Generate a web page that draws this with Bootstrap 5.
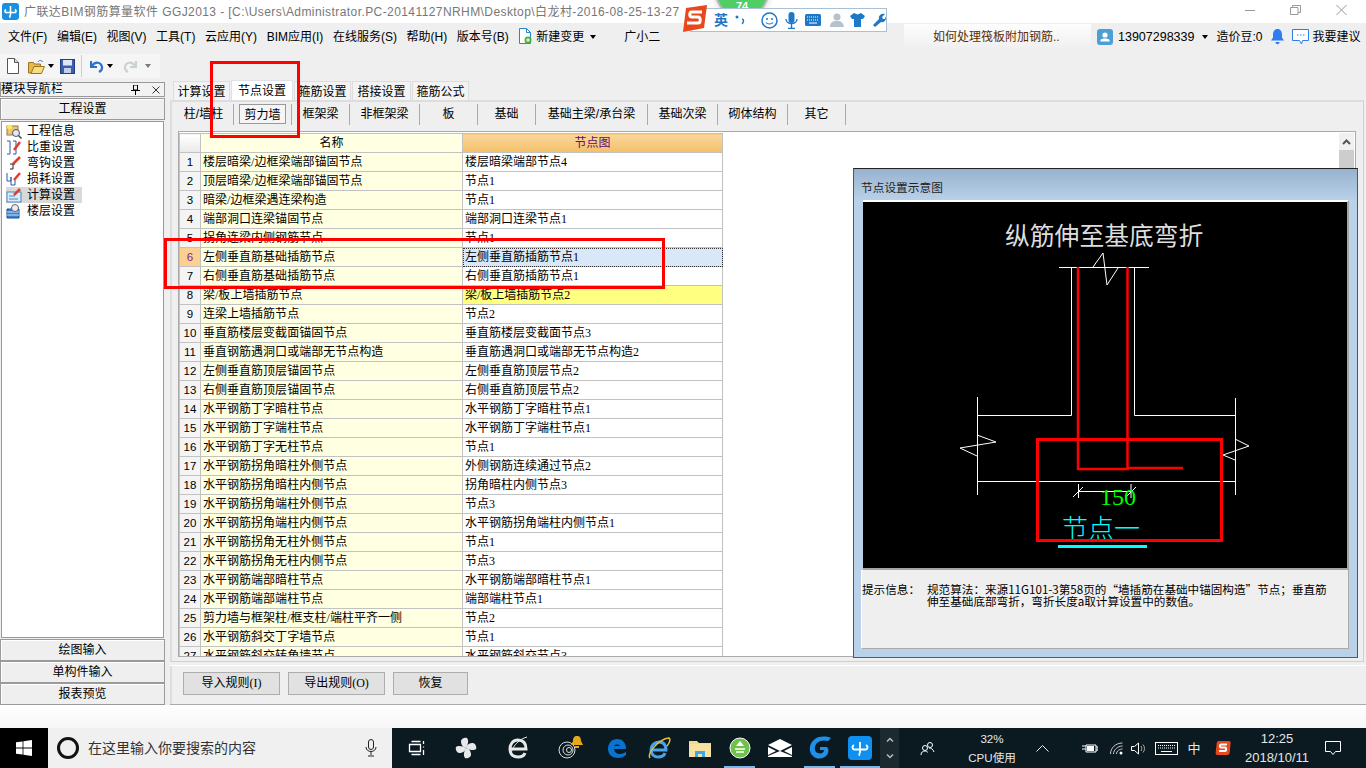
<!DOCTYPE html>
<html lang="zh">
<head>
<meta charset="utf-8">
<title>GGJ2013</title>
<link href="https://cdn.jsdelivr.net/npm/bootstrap@5.3.0/dist/css/bootstrap.min.css" rel="stylesheet">
<style>
html,body{height:768px;overflow:hidden}
body{width:1366px;position:relative;background:#efefef;color:#000;font:12px/16px "Liberation Sans","Noto Sans CJK SC",sans-serif}
svg{display:block;flex:none}
.simsun{font-family:"Liberation Serif","Noto Sans CJK SC",serif}
.title-row{height:23px;background:#fff;color:#777}
.app-logo{margin:3px 5px 0 2px}
.title-text{letter-spacing:.42px;white-space:nowrap;line-height:24px}
.win-ctl{position:absolute;top:5px}
.c1{left:1245px}.c2{left:1290px}.c3{left:1336px}
.menu-row{height:27px;padding-left:8px}
.menu-row .mi{margin-right:9.6px;white-space:nowrap}
.menu-row .mi.nogap{margin-right:6px}
.menu-row .mi.gxe{margin-left:28px}
.caret-s{width:0;height:0;border:3.5px solid transparent;border-top:4px solid #000;border-bottom:0;display:inline-block}
.q-tab{position:absolute;left:904px;top:24px;width:187px;height:26px;background:linear-gradient(#fdfdfd,#efefef);color:#5c2c00;line-height:26px;padding-left:29px;font-size:12px}
.acct{position:absolute;left:1097px;top:24px;height:26px}
.phone{font-size:12.5px;margin-left:1px}
.tool-row{height:30px;padding:4px 0 0 0}
.tool-box{height:24px;width:160px;background:#f5f5f5;padding-left:6px}
.tb-open{margin-left:9px}
.tb-save{margin-left:6px}
.tool-sep{width:1px;height:22px;background:#ccc;margin:0 8px 0 6px}
.tb-arrow{margin-left:3px}
.tb-redo{margin-left:10px}
.work{height:625px}
.left-pane{width:165px;margin-right:5px}
.nav-head{height:15px;margin-top:2px;border:1px solid #999;background:#f2f2f2;line-height:13px;letter-spacing:.5px}
.pane-btn{display:block;width:100%;height:22px;padding:0;border:1px solid #9a9a9a;border-radius:0;background:#efefef;color:#000;font-size:12px;line-height:20px;box-shadow:inset 1px 1px 0 #fff}
.pane-btn:hover{background:#efefef;color:#000;border-color:#9a9a9a}
.pane-btn.first{margin-top:1px}
.nav-tree{height:517px;margin:1px 0 1px 1px;width:163px;border:1px solid #999;border-radius:0;background:#fff;padding:1px 0 0 4px}
.tree-row{height:16px;padding:0;border:0;background:transparent;color:#000;display:flex;align-items:center;width:76px;gap:5px;font-size:12px;border-radius:0}
.tree-row.on{background:#d9d9d9}
.right-pane{width:1196px}
.tabs-row{height:20px;border:0;padding:1px 0 0 3px;gap:1px;margin:0}
.tabs-row .nav-link{border:1px solid #ddd;border-bottom:0;border-radius:0;background:#f3f3f3;color:#000;height:19px;padding:0;line-height:20px;text-align:center;font-size:12px;margin:0}
.tabs-row .tw1{width:57px}.tabs-row .tw2{width:62px;background:#fff;height:20px;margin-top:-1px}.tabs-row .tw3{width:57px}.tabs-row .tw4{width:59px}
.page-box{height:562px;border:1px solid #d0d0d0;border-left:2px solid #ddd;border-top:2px solid #ddd;margin-right:2px;padding:2px;display:flex;flex-direction:column}
.sub-row{height:25px;padding-left:0;border-bottom:0;flex:none}
.sub-tab{height:21px;line-height:21px;text-align:center;border-right:1px solid #aaa;width:58px;font-size:12px;flex:none}
.sub-tab.st0{width:60px}.sub-tab.st1{width:70px}.sub-tab.st2{width:112px}
.sub-box{display:block;margin:0 5px;height:20px;line-height:20px;border:1px solid #999;background:#f5f5f5}
.grid-frame{margin:2px 0 0 4px;height:526px;width:1178px;border:1px solid #aaa;background:#fff;display:flex;overflow:hidden;flex:none}
.grid-wrap{width:1160px;overflow:hidden;padding:1px 0 0 0;height:524px}
.ntable{width:544px;margin:0;table-layout:fixed;border-collapse:collapse;--bs-table-bg:transparent;border-color:#c2c2c2}
.ntable th,.ntable td{height:19px;padding:0 0 0 2px;line-height:18px;font-weight:400;font-size:12px;white-space:nowrap;border:1px solid #c2c2c2;box-sizing:border-box;overflow:hidden;color:#000;background:#fff;vertical-align:middle}
.ntable .ncol{width:21px;padding:0;text-align:center;background:#f4f4f4;font-family:"Liberation Sans",sans-serif;font-size:11.5px}
.ntable .lcol{width:262px;background:#ffffe2;letter-spacing:.02px}
.ntable th{text-align:center;padding:0;background:linear-gradient(#fff,#e9e9e9)}
.ntable th.ncol{background:linear-gradient(#fff,#e9e9e9)}
.ntable th.hot{background:linear-gradient(#fad79e,#f3c066);color:#5f0a78}
.ntable td.sel{background:#d8e8f8;outline:1px dotted #333;outline-offset:-1px}
.ntable td.ncol.sel-n{background:#fcd08f;color:#7a1fa0}
.ntable td.warn{background:#ffff80}
.vbar{width:15px;background:#f0f0f0;flex:none;height:100%;margin-top:1px}
.vbar-top{height:17px;display:flex;align-items:center;justify-content:center}
.vbar-thumb{height:200px;background:#cdcdcd}
.btn-bar{height:40px;margin-top:3px;border-top:1px solid #fff;padding:6px 0 0 13px;gap:8px;border-bottom:1px solid #aaa;box-shadow:inset 2px 0 0 #ddd;margin-right:0}
.act-btn{height:23px;padding:0;border:1px solid #adadad;border-radius:0;background:#e1e1e1;color:#000;font-size:12px;line-height:21px;width:97px}
.act-btn:hover{background:#e1e1e1;color:#000;border-color:#adadad}
.act-btn.short{width:75px}
.strip{height:23px;background:linear-gradient(#fff,#f6f6f6)}
.taskbar{height:40px;background:#0a1a20;color:#fff;position:relative}
.start-slot{width:48px;height:40px;background:#000;display:flex;align-items:center;justify-content:center}
.search-box{width:344px;height:40px;background:#f0f0f0;color:#333;display:flex;align-items:center;padding-left:9px;font-size:14px;position:relative}
.ring{width:22px;height:22px;border:3px solid #111;border-radius:50%;margin:0 9px 0 0;flex:none}
.search-mic{position:absolute;left:317px;top:11px}
.tslot{height:40px;display:flex;align-items:center;justify-content:center;position:relative;flex:none}
.run::after{content:"";position:absolute;left:4px;right:5px;bottom:0;height:2px;background:#76b9ed}
.active-app.run::after{left:0;right:0}
.s40{width:40px}.s42{width:42px}.s48{width:48px}.s52{width:52px}.s54{width:54px}
.s-updown{width:19px;background:#1c2a30;gap:12px}
.s-person{width:56px}.s-cpu{width:74px}.s-caret{width:26px}.s-batt{width:47px;padding-left:23px}.s-wifi{width:28px}.s-vol{width:16px}.s-zh{width:16px;font-size:13px;color:#fff}.s-sogou{width:42px}.s-clock{width:66px;white-space:nowrap;font-size:13px}.s-note{width:46px}
.tray{font-size:11.6px;text-align:center;line-height:19px;color:#e6e6e6}
.s-clock.tray{font-size:13px}
.s-zh.tray{font-size:13px}
.dialog{position:absolute;left:853px;top:168px;width:505px;height:490px;border:1px solid #222;border-color:#222 #555 #2a6b80 #555;background:linear-gradient(#98b2ce,#bad1ea 32px);padding:2px 9px 8px 7px}
.dlg-title{height:29px;line-height:33px;color:#222;font-size:11.7px}
.dlg-img{background:#000;width:486px;height:370px;border-top:2px solid #fff;border-right:2px solid #a4a4a4;border-bottom:2px solid #a4a4a4;margin-left:2px}
.dlg-info{height:79px;background:#efefef;border-right:1px solid #aaa;border-bottom:1px solid #aaa;width:488px;display:flex;padding:13px 0 0 0;font:11.6px/12px "Noto Sans CJK SC",sans-serif;white-space:nowrap;border-left:1px solid #fff}
.dlg-info .lbl{width:65px;flex:none}
.anno{position:absolute;border:3px solid #f00;pointer-events:none}
.a1{left:210px;top:61px;width:90px;height:77px}
.a2{left:164px;top:238px;width:501px;height:51px}
.a3{left:1036px;top:438px;width:187px;height:104px}
.ball{position:absolute;left:717px;top:-33px;width:50px;height:50px;border-radius:50%;background:#4fcf63;box-shadow:0 0 0 2px #bbb,0 0 6px 3px #ddd;color:#fff;font-weight:700;font-size:11px;text-align:center;padding-top:32px;line-height:14px}
.ime{position:absolute;left:690px;top:8px;width:197px;height:24px;background:#fff;border:1px solid #a9c0d6;display:flex;align-items:center;padding-left:23px;color:#1e78c8}
.ime-s{position:absolute;left:682px;top:5px}
.ime-ying{font-weight:700;font-size:14px;width:21px}
.ime-dot{margin-right:12px;margin-left:0}
.ime-gap{margin-left:7px}
</style>
</head>
<body class="d-flex flex-column">

<div class="title-row d-flex flex-none">
  <svg class="app-logo" width="17" height="17" viewBox="0 0 17 17"><rect width="17" height="17" rx="3" fill="#1a8fe0"/><path d="M8.5 3v9M4 6.5c-2 1.500-1 3.500 1 3h7c2 .5 3-1.500 1-3M8.500 12c-1 1-1 2 0 2.500" stroke="#fff" stroke-width="1.600" fill="none"/></svg>
  <span class="title-text">广联达BIM钢筋算量软件 GGJ2013 - [C:\Users\Administrator.PC-20141127NRHM\Desktop\白龙村-2016-08-25-13-27</span>
  <svg class="win-ctl c1" width="10" height="10"><path d="M0 5.500h10" stroke="#999"/></svg>
  <svg class="win-ctl c2" width="11" height="10"><path d="M.5 2.500h7.500v7h-7.500zM2.500 2.500v-2h8v7h-2.500" stroke="#999" fill="none"/></svg>
  <svg class="win-ctl c3" width="11" height="10"><path d="M.5 0l10 10M10.500 0l-10 10" stroke="#999"/></svg>
</div>

<div class="menu-row d-flex align-items-center">
  <span class="mi">文件(F)</span><span class="mi">编辑(E)</span><span class="mi">视图(V)</span><span class="mi">工具(T)</span><span class="mi">云应用(Y)</span><span class="mi">BIM应用(I)</span><span class="mi">在线服务(S)</span><span class="mi">帮助(H)</span><span class="mi">版本号(B)</span>
  <svg width="14" height="17" viewBox="0 0 14 17" class="me-1"><path d="M1.500.5h7l4 4v11h-11z" fill="#fff" stroke="#2a86c8"/><path d="M8.500.5v4h4" fill="none" stroke="#2a86c8"/><circle cx="10" cy="12" r="3.500" fill="#4caf3a"/><path d="M8 12h4M10 10v4" stroke="#fff"/></svg>
  <span class="mi nogap">新建变更</span><span class="caret-s"></span>
  <span class="mi gxe">广小二</span>
</div>
<div class="q-tab">如何处理筏板附加钢筋..</div>
<div class="acct d-flex align-items-center">
  <svg width="16" height="16" viewBox="0 0 16 16" class="me-1"><rect width="16" height="16" rx="3" fill="#4a9fd4"/><circle cx="8" cy="6" r="2.600" fill="#fff"/><path d="M3.500 12.500h9v-1.500c-1-2-8-2-9 0z" fill="#fff"/></svg>
  <span class="phone">13907298339</span>
  <span class="caret-s ms-2 me-2"></span>
  <span>造价豆:0</span>
  <svg width="13" height="16" viewBox="0 0 13 16" class="ms-2 me-2"><path d="M6.500 0c3 0 4.500 2.500 4.500 5.500v3l2 3h-13l2-3v-3c0-3 1.500-5.500 4.500-5.500zM4.500 13h4c0 3-4 3-4 0z" fill="#2b7df0"/></svg>
  <svg width="17" height="16" viewBox="0 0 17 16" class="me-1"><path d="M.5.5h16v11h-6l-1 3.500-2-3.500h-7z" fill="#fff" stroke="#2b7df0"/><path d="M5 6h1.500M8 6h1.500M11 6h1.500" stroke="#2b7df0"/></svg>
  <span>我要建议</span>
</div>

<div class="tool-row d-flex">
  <div class="tool-box d-flex align-items-center">
    <svg width="13" height="16" viewBox="0 0 13 16"><path d="M1.500.5h7l4 4v11h-11z" fill="#fff" stroke="#555"/><path d="M8.500.5v4h4" fill="#ddd" stroke="#555"/></svg>
    <svg class="tb-open" width="17" height="15" viewBox="0 0 17 15"><path d="M.5 3.500h5l1 1.500h6v9h-12z" fill="#e8b84a" stroke="#9a7420"/><path d="M3 14.500l3-7h10.500l-3 7z" fill="#f8dc84" stroke="#9a7420"/><path d="M10 3c1-2 3-2 5 0" stroke="#3a6ec0" fill="none"/></svg>
    <span class="caret-s tb-arrow"></span>
    <svg class="tb-save" width="15" height="15" viewBox="0 0 15 15"><rect x=".5" y=".5" width="14" height="14" fill="#3a5fb0" stroke="#24407c"/><rect x="3" y="1" width="9" height="5.500" fill="#dfe7f5"/><rect x="4" y="9" width="7" height="5" fill="#c2cfe8"/></svg>
    <span class="tool-sep"></span>
    <svg width="14" height="15" viewBox="0 0 14 15"><path d="M1 2v6h6M2 7c3-5 9-4 10 1 .3 2-1 4-3 5" fill="none" stroke="#2a6fc8" stroke-width="2.200"/></svg>
    <span class="caret-s tb-arrow"></span>
    <svg class="tb-redo" width="14" height="15" viewBox="0 0 14 15"><path d="M13 2v6h-6M12 7c-3-5-9-4-10 1-.3 2 1 4 3 5" fill="none" stroke="#c9d2d6" stroke-width="2.200"/></svg>
    <span class="caret-s ms-2 opacity-50"></span>
  </div>
</div>

<div class="work d-flex">
  <div class="left-pane">
    <div class="nav-head d-flex justify-content-between"><span>模块导航栏</span>
      <span class="d-flex align-items-center gap-2 pe-1 pt-0">
        <svg width="9" height="10" viewBox="0 0 9 10"><path d="M2.500 0h4v5h-4zM0 5.500h9M4.500 5.500v4.500" stroke="#000" fill="none"/></svg>
        <svg class="ms-1" width="8" height="8" viewBox="0 0 8 8"><path d="M.5.500l7 7M7.500.500l-7 7" stroke="#333"/></svg>
      </span>
    </div>
    <button class="btn pane-btn first" type="button">工程设置</button>
    <div class="list-group nav-tree">
      <div class="list-group-item tree-row"><svg width="16" height="15" viewBox="0 0 16 15"><rect x="1" y="2" width="11" height="9" fill="#e8c878" stroke="#9a7b30"/><circle cx="3.500" cy="3" r="2.500" fill="#ffe860"/><circle cx="10" cy="9" r="3.500" fill="#dfe9f7" stroke="#556"/><path d="M12.500 11.500l3 3" stroke="#444" stroke-width="1.500"/></svg>工程信息</div>
      <div class="list-group-item tree-row"><svg width="16" height="15" viewBox="0 0 16 15"><path d="M1 1h3v13h-3M7 1h3v13h-3" fill="none" stroke="#2b5aa8"/><path d="M8 10l6-8" stroke="#e8392a" stroke-width="2.500"/></svg>比重设置</div>
      <div class="list-group-item tree-row"><svg width="16" height="15" viewBox="0 0 16 15"><path d="M7 8v5h-3M4 8h5" fill="none" stroke="#222"/><path d="M7 8l7-7" stroke="#e8392a" stroke-width="2.500"/></svg>弯钩设置</div>
      <div class="list-group-item tree-row"><svg width="16" height="15" viewBox="0 0 16 15"><path d="M1 1v8h4v-4v8h4v-5" fill="none" stroke="#2b5aa8"/><path d="M8 8l6-7" stroke="#e8392a" stroke-width="2.500"/></svg>损耗设置</div>
      <div class="list-group-item tree-row on"><svg width="16" height="15" viewBox="0 0 16 15"><rect x="1" y="4" width="14" height="10" fill="#d8ecfa" stroke="#4a86c0"/><path d="M3 8h6M3 11h9" stroke="#4a86c0"/><path d="M8 7l6-6" stroke="#e8392a" stroke-width="2.500"/></svg>计算设置</div>
      <div class="list-group-item tree-row"><svg width="16" height="15" viewBox="0 0 16 15"><path d="M1 5h12v9h-12z" fill="#3a80d0" stroke="#1c4f96"/><path d="M1 8h12M1 11h12" stroke="#cfe4f8"/><circle cx="9" cy="4" r="3.500" fill="#e8eef6" stroke="#666"/></svg>楼层设置</div>
    </div>
    <button class="btn pane-btn" type="button">绘图输入</button>
    <button class="btn pane-btn" type="button">单构件输入</button>
    <button class="btn pane-btn" type="button">报表预览</button>
  </div>

  <div class="right-pane d-flex flex-column">
    <ul class="nav nav-tabs tabs-row">
      <li class="nav-item"><a class="nav-link tw1" href="#">计算设置</a></li>
      <li class="nav-item"><a class="nav-link active tw2" href="#">节点设置</a></li>
      <li class="nav-item"><a class="nav-link tw3" href="#">箍筋设置</a></li>
      <li class="nav-item"><a class="nav-link tw4" href="#">搭接设置</a></li>
      <li class="nav-item"><a class="nav-link tw3" href="#">箍筋公式</a></li>
    </ul>
    <div class="page-box">
      <div class="sub-row d-flex">
        <div class="sub-tab st0">柱/墙柱</div>
        <div class="sub-tab"><span class="sub-box">剪力墙</span></div>
        <div class="sub-tab">框架梁</div>
        <div class="sub-tab st1">非框架梁</div>
        <div class="sub-tab">板</div>
        <div class="sub-tab">基础</div>
        <div class="sub-tab st2">基础主梁/承台梁</div>
        <div class="sub-tab st1">基础次梁</div>
        <div class="sub-tab st1">砌体结构</div>
        <div class="sub-tab">其它</div>
      </div>
      <div class="grid-frame">
        <div class="grid-wrap">
          <table class="table table-bordered ntable simsun">
            <thead><tr><th class="ncol"></th><th class="lcol">名称</th><th class="hot">节点图</th></tr></thead>
            <tbody>
              <tr><td class="ncol">1</td><td class="lcol">楼层暗梁/边框梁端部锚固节点</td><td>楼层暗梁端部节点4</td></tr>
              <tr><td class="ncol">2</td><td class="lcol">顶层暗梁/边框梁端部锚固节点</td><td>节点1</td></tr>
              <tr><td class="ncol">3</td><td class="lcol">暗梁/边框梁遇连梁构造</td><td>节点1</td></tr>
              <tr><td class="ncol">4</td><td class="lcol">端部洞口连梁锚固节点</td><td>端部洞口连梁节点1</td></tr>
              <tr><td class="ncol">5</td><td class="lcol">拐角连梁内侧钢筋节点</td><td>节点1</td></tr>
              <tr><td class="ncol sel-n">6</td><td class="lcol">左侧垂直筋基础插筋节点</td><td class="sel">左侧垂直筋插筋节点1</td></tr>
              <tr><td class="ncol">7</td><td class="lcol">右侧垂直筋基础插筋节点</td><td>右侧垂直筋插筋节点1</td></tr>
              <tr><td class="ncol">8</td><td class="lcol">梁/板上墙插筋节点</td><td class="warn">梁/板上墙插筋节点2</td></tr>
              <tr><td class="ncol">9</td><td class="lcol">连梁上墙插筋节点</td><td>节点2</td></tr>
              <tr><td class="ncol">10</td><td class="lcol">垂直筋楼层变截面锚固节点</td><td>垂直筋楼层变截面节点3</td></tr>
              <tr><td class="ncol">11</td><td class="lcol">垂直钢筋遇洞口或端部无节点构造</td><td>垂直筋遇洞口或端部无节点构造2</td></tr>
              <tr><td class="ncol">12</td><td class="lcol">左侧垂直筋顶层锚固节点</td><td>左侧垂直筋顶层节点2</td></tr>
              <tr><td class="ncol">13</td><td class="lcol">右侧垂直筋顶层锚固节点</td><td>右侧垂直筋顶层节点2</td></tr>
              <tr><td class="ncol">14</td><td class="lcol">水平钢筋丁字暗柱节点</td><td>水平钢筋丁字暗柱节点1</td></tr>
              <tr><td class="ncol">15</td><td class="lcol">水平钢筋丁字端柱节点</td><td>水平钢筋丁字端柱节点1</td></tr>
              <tr><td class="ncol">16</td><td class="lcol">水平钢筋丁字无柱节点</td><td>节点1</td></tr>
              <tr><td class="ncol">17</td><td class="lcol">水平钢筋拐角暗柱外侧节点</td><td>外侧钢筋连续通过节点2</td></tr>
              <tr><td class="ncol">18</td><td class="lcol">水平钢筋拐角暗柱内侧节点</td><td>拐角暗柱内侧节点3</td></tr>
              <tr><td class="ncol">19</td><td class="lcol">水平钢筋拐角端柱外侧节点</td><td>节点3</td></tr>
              <tr><td class="ncol">20</td><td class="lcol">水平钢筋拐角端柱内侧节点</td><td>水平钢筋拐角端柱内侧节点1</td></tr>
              <tr><td class="ncol">21</td><td class="lcol">水平钢筋拐角无柱外侧节点</td><td>节点1</td></tr>
              <tr><td class="ncol">22</td><td class="lcol">水平钢筋拐角无柱内侧节点</td><td>节点3</td></tr>
              <tr><td class="ncol">23</td><td class="lcol">水平钢筋端部暗柱节点</td><td>水平钢筋端部暗柱节点1</td></tr>
              <tr><td class="ncol">24</td><td class="lcol">水平钢筋端部端柱节点</td><td>端部端柱节点1</td></tr>
              <tr><td class="ncol">25</td><td class="lcol">剪力墙与框架柱/框支柱/端柱平齐一侧</td><td>节点2</td></tr>
              <tr><td class="ncol">26</td><td class="lcol">水平钢筋斜交丁字墙节点</td><td>节点1</td></tr>
              <tr><td class="ncol">27</td><td class="lcol">水平钢筋斜交转角墙节点</td><td>水平钢筋斜交节点3</td></tr>
            </tbody>
          </table>
        </div>
        <div class="vbar">
          <div class="vbar-top"><svg width="9" height="6" viewBox="0 0 9 6"><path d="M1 5l3.500-3.500 3.500 3.500" fill="none" stroke="#555" stroke-width="2"/></svg></div>
          <div class="vbar-thumb"></div>
        </div>
      </div>
    </div>
    <div class="btn-bar d-flex">
      <button class="btn act-btn simsun" type="button">导入规则(I)</button>
      <button class="btn act-btn simsun" type="button">导出规则(O)</button>
      <button class="btn act-btn short simsun" type="button">恢复</button>
    </div>
  </div>
</div>

<div class="strip"></div>

<div class="taskbar d-flex">
  <div class="start-slot"><svg width="16" height="16" viewBox="0 0 16 16"><path d="M0 2.300l6.600-.9v6.200h-6.600zM7.400 1.300l8.600-1.300v7.600h-8.600zM0 8.400h6.600v6.200l-6.600-.9zM7.400 8.400h8.600v7.600l-8.600-1.300z" fill="#fff"/></svg></div>
  <div class="search-box"><span class="ring"></span><span>在这里输入你要搜索的内容</span>
    <svg class="search-mic" width="12" height="18" viewBox="0 0 12 18"><rect x="3.500" y=".5" width="5" height="10" rx="2.500" fill="none" stroke="#222"/><path d="M1 8c0 6 10 6 10 0M6 13v3M3 17h6" fill="none" stroke="#222"/></svg>
  </div>
  <div class="tslot s48"><svg width="17" height="16" viewBox="0 0 17 16"><path d="M3.500 1.500h9M3.500 14.500h9M1.500 4.500h11v7h-11zM15.500 1v3M15.500 6.500v1M15.500 10v5" fill="none" stroke="#fff" stroke-width="1.300"/></svg></div>
  <div class="tslot s52"><svg width="22" height="22" viewBox="0 0 22 22"><g fill="#e8e8e8"><path d="M11 11c-4-1-5-4-5-7 0-2 4-4 6-3 2 2 1 7-1 10z"/><path d="M11 11c1-4 4-5 7-5 2 0 4 4 3 6-2 2-7 1-10-1z"/><path d="M11 11c4 1 5 4 5 7 0 2-4 4-6 3-2-2-1-7 1-10z"/><path d="M11 11c-1 4-4 5-7 5-2 0-4-4-3-6 2-2 7-1 10 1z"/></g></svg></div>
  <div class="tslot s52"><svg width="22" height="24" viewBox="0 0 22 24"><path d="M3 13h16c0-6-3-9-8-9-5 0-8 4-8 9 0 6 4 8 8 8 3 0 6-1 7-4" fill="none" stroke="#e8e8e8" stroke-width="3"/><path d="M5 20c-3-4 4-16 15-19" fill="none" stroke="#e8e8e8"/></svg></div>
  <div class="tslot s54"><svg width="28" height="26" viewBox="0 0 28 26"><circle cx="10" cy="15" r="8" fill="none" stroke="#ddd"/><circle cx="11" cy="15" r="5" fill="none" stroke="#ddd"/><circle cx="12" cy="15" r="2.500" fill="none" stroke="#ddd"/><path d="M20 1c3 0 4 2 4 5l2 4h-12l2-4c0-3 1-5 4-5z" fill="#e8a81c"/><path d="M18 11h4v2h-4z" fill="#e8a81c"/></svg></div>
  <div class="tslot s40"><svg width="22" height="22" viewBox="0 0 22 22"><path d="M1 12h18c0-7-4-10-9-10-5 0-9 4-9 10 0 6 5 9 10 9 3 0 6-1 8-3v-3c-5 3-11 3-12-3z" fill="#0a72cf"/><path d="M7 9c1-2 5-2 6 0z" fill="#0a1a20"/></svg></div>
  <div class="tslot s42"><svg width="24" height="24" viewBox="0 0 24 24"><path d="M4 14h15c0-6-3-8-7-8-4 0-8 3-8 8 0 5 4 7 7 7 3 0 6-1 7-4" fill="none" stroke="#4aa3e8" stroke-width="3"/><path d="M3 22c-3-4 8-19 19-20 2 1 0 6-2 8" fill="none" stroke="#e6c040" stroke-width="1.500"/></svg></div>
  <div class="tslot s40"><svg width="22" height="19" viewBox="0 0 22 19"><path d="M0 2h8l2 2h12v14h-22z" fill="#f3d98a"/><path d="M0 5h22v13h-22z" fill="#f6e3a2"/><path d="M6 18v-6h10v6h-3v-3h-4v3z" fill="#3fa9e8"/></svg></div>
  <div class="tslot run s40"><svg width="22" height="22" viewBox="0 0 22 22"><circle cx="11" cy="11" r="10" fill="#6fc24a" stroke="#fff"/><path d="M6 12h10M7 15h8" stroke="#fff" stroke-width="1.500"/><path d="M11 4l4 5h-8z" fill="#fff"/></svg></div>
  <div class="tslot s40"><svg width="24" height="18" viewBox="0 0 24 18"><path d="M0 6l12-6 12 6v12h-24z" fill="#fff"/><path d="M0 6l12 6 12-6v2l-8 4 8 4v1l-12-5-12 5v-1l8-4-8-4z" fill="#0a1a20"/></svg></div>
  <div class="tslot run s40"><svg width="24" height="24" viewBox="0 0 24 24"><path d="M23 2c-5-2-12-2-16 1-6 4-7 13-2 17 4 4 11 3 14-1 2-3 2-6 0-8h-7v3h4c0 3-3 4-6 3-4-1-4-7-1-10 3-3 8-3 11-2z" fill="#1f8fe8"/></svg></div>
  <div class="tslot run s40 active-app"><svg width="24" height="24" viewBox="0 0 24 24"><rect width="24" height="24" rx="4" fill="#0f8ff0"/><path d="M12 6v11M6 9c-3 2-1 5 1 4.500h10c2 .5 4-2.500 1-4.500M12 17c-1 1-1 2 0 2.500" stroke="#fff" stroke-width="1.800" fill="none"/></svg></div>
  <div class="tslot flex-column s-updown"><svg width="8" height="5" viewBox="0 0 8 5"><path d="M1 4.500l3-3 3 3" fill="none" stroke="#bbb" stroke-width="1.500"/></svg><svg width="8" height="5" viewBox="0 0 8 5"><path d="M1 .5l3 3 3-3" fill="none" stroke="#bbb" stroke-width="1.500"/></svg></div>
  <div class="tslot s-person"><svg width="15" height="15" viewBox="0 0 15 15"><circle cx="10" cy="4" r="2.500" fill="none" stroke="#fff"/><circle cx="5" cy="7" r="2.500" fill="none" stroke="#fff"/><path d="M1 14c0-3 2-4 4-4 1 0 2 .5 3 1.500M9 7c2 0 4 1 5 4" fill="none" stroke="#fff"/></svg></div>
  <div class="tslot tray flex-column s-cpu"><span>32%</span><span>CPU使用</span></div>
  <div class="tslot s-caret"><svg width="13" height="8" viewBox="0 0 13 8"><path d="M.5 7.500l6-6 6 6" fill="none" stroke="#eee"/></svg></div>
  <div class="tslot s-batt"><svg width="16" height="10" viewBox="0 0 16 10"><path d="M4 2h10v7h-10zM14 4h2v3h-2M0 3h4M0 6h4" fill="none" stroke="#fff"/><rect x="5" y="3" width="7" height="5" fill="#fff"/></svg></div>
  <div class="tslot s-wifi"><svg width="13" height="13" viewBox="0 0 13 13"><path d="M.5 12c0-6 5-11 12-11M3.500 12c0-4 4-8 9-8M6.500 12c0-3 3-5 6-5" fill="none" stroke="#ccc"/><circle cx="11" cy="11" r="1.500" fill="#fff"/></svg></div>
  <div class="tslot s-vol"><svg width="15" height="13" viewBox="0 0 15 13"><path d="M.5 4.500h3l4-3.500v11l-4-3.500h-3z" fill="none" stroke="#fff"/><path d="M10 4c1 1.500 1 3.500 0 5M12 2.500c2 2 2 6 0 8" fill="none" stroke="#aaa"/></svg></div>
  <div class="tslot s40"><svg width="23" height="13" viewBox="0 0 23 13"><rect x=".5" y=".5" width="22" height="12" fill="none" stroke="#fff"/><path d="M3 3.500h17M3 6h17" stroke="#fff" stroke-dasharray="1 1"/><path d="M6 9.500h11" stroke="#fff"/></svg></div>
  <div class="tslot tray s-zh">中</div>
  <div class="tslot s-sogou"><svg width="16" height="16" viewBox="0 0 16 16"><rect x="1" y="1" width="14" height="14" rx="2" fill="#e8481c" transform="skewX(-6) translate(1 0)"/><path d="M12 4.500h-6c-1.500 0-1.500 3 0 3h4c1.500 0 1.500 3.500 0 3.500h-6" fill="none" stroke="#fff" stroke-width="2"/></svg></div>
  <div class="tslot tray flex-column s-clock"><span>12:25</span><span>2018/10/11</span></div>
  <div class="tslot s-note"><svg width="16" height="16" viewBox="0 0 16 16"><path d="M.5 1.500h15v10h-5l-2.500 3-2.500-3h-5z" fill="none" stroke="#fff"/></svg></div>
</div>

<div class="dialog">
  <div class="dlg-title">节点设置示意图</div>
  <div class="dlg-img">
    <svg width="484" height="368" viewBox="863 200 484 368">
      <g fill="none" stroke="#fff" stroke-width="1">
        <path d="M1059 265.500h90M1071.500 265.500v148h-94.500M1134.500 265.500v148h101M977.500 395v98M1235.500 396v97M977 479.500h258"/>
        <path d="M1093 265l10-14 4 32 11-17M977 433l19 7-36 6 17 8M1235 437l14 7-26 9 12 5"/>
        <path d="M1078 489.500h53M1078.500 482v14M1131 482v14M1073 495l10-10M1126 495l10-10"/>
      </g>
      <path d="M1078 265v202h51M1127.500 265v201h55.500" fill="none" stroke="#f00" stroke-width="2.500"/>
      <text x="1005" y="243" fill="#ddd" font-family="'Liberation Serif','Noto Sans CJK SC',serif" font-size="24.800">纵筋伸至基底弯折</text>
      <text x="1100" y="503" fill="#0f0" font-family="'Liberation Serif',serif" font-size="24">150</text>
      <text x="1062" y="536" fill="#0ff" font-family="'Noto Sans CJK SC',sans-serif" font-weight="300" font-size="26">节点一</text>
      <rect x="1058" y="543" width="89" height="3" fill="#0ff"/>
    </svg>
  </div>
  <div class="dlg-info">
    <span class="lbl">提示信息：</span>
    <span>规范算法：来源11G101-3第58页的“墙插筋在基础中锚固构造”节点；垂直筋<br>伸至基础底部弯折，弯折长度a取计算设置中的数值。</span>
  </div>
</div>

<div class="anno a1"></div>
<div class="anno a2"></div>
<div class="anno a3"></div>

<div class="ball">74</div>
<div class="ime">
  <span class="ime-ying">英</span>
  <svg width="10" height="12" viewBox="0 0 10 12" class="ime-dot"><circle cx="2" cy="3" r="1.500" fill="#1e78c8"/><path d="M7 5c2 0 2 3 0 5" fill="none" stroke="#1e78c8" stroke-width="1.500"/></svg>
  <svg width="17" height="17" viewBox="0 0 17 17" class="ms-1"><circle cx="8.500" cy="8.500" r="7.500" fill="none" stroke="#1e78c8" stroke-width="1.500"/><circle cx="6" cy="7" r="1" fill="#1e78c8"/><circle cx="11" cy="7" r="1" fill="#1e78c8"/><path d="M5 10.500c1.500 2 5.500 2 7 0" fill="none" stroke="#1e78c8" stroke-width="1.200"/></svg>
  <svg width="13" height="17" viewBox="0 0 13 17" class="ime-gap"><rect x="3.500" y="0" width="6" height="11" rx="3" fill="#1e78c8"/><path d="M1 7c0 6 11 6 11 0M6.500 12v4M3 16.500h7" fill="none" stroke="#1e78c8" stroke-width="1.400"/></svg>
  <svg width="16" height="12" viewBox="0 0 16 12" class="ime-gap"><rect width="16" height="12" rx="1.500" fill="#1e78c8"/><path d="M2 3h12M2 6h12" stroke="#fff" stroke-dasharray="1 1"/><path d="M4 9h8" stroke="#fff"/></svg>
  <svg width="17" height="15" viewBox="0 0 17 15" class="ms-2"><circle cx="8" cy="4" r="3.500" fill="#b5c2cc"/><path d="M1 14c0-5 3-6 7-6s6 1 7 6z" fill="#b5c2cc"/></svg>
  <svg width="15" height="14" viewBox="0 0 15 14" class="ms-1"><path d="M4 0l3.500 1.500 3.500-1.500 4 3-2 3h-2v8h-7v-8h-2l-2-3z" fill="#1e78c8"/></svg>
  <svg width="14" height="14" viewBox="0 0 14 14" class="ime-gap"><path d="M1 12l6-6c-1-3 2-6 6-5l-3 3 1 2 2 0 1-3c1 4-2 7-5 6l-6 5z" fill="#1e78c8"/></svg>
</div>
<svg class="ime-s" width="26" height="27" viewBox="0 0 26 27"><path d="M4 3l21-3-3 23-21 4z" fill="#e8481c"/><path d="M20 7h-10c-3 0-3 5 0 5h6c3 0 3 6 0 6h-11" fill="none" stroke="#fff" stroke-width="3"/></svg>

</body>
</html>
